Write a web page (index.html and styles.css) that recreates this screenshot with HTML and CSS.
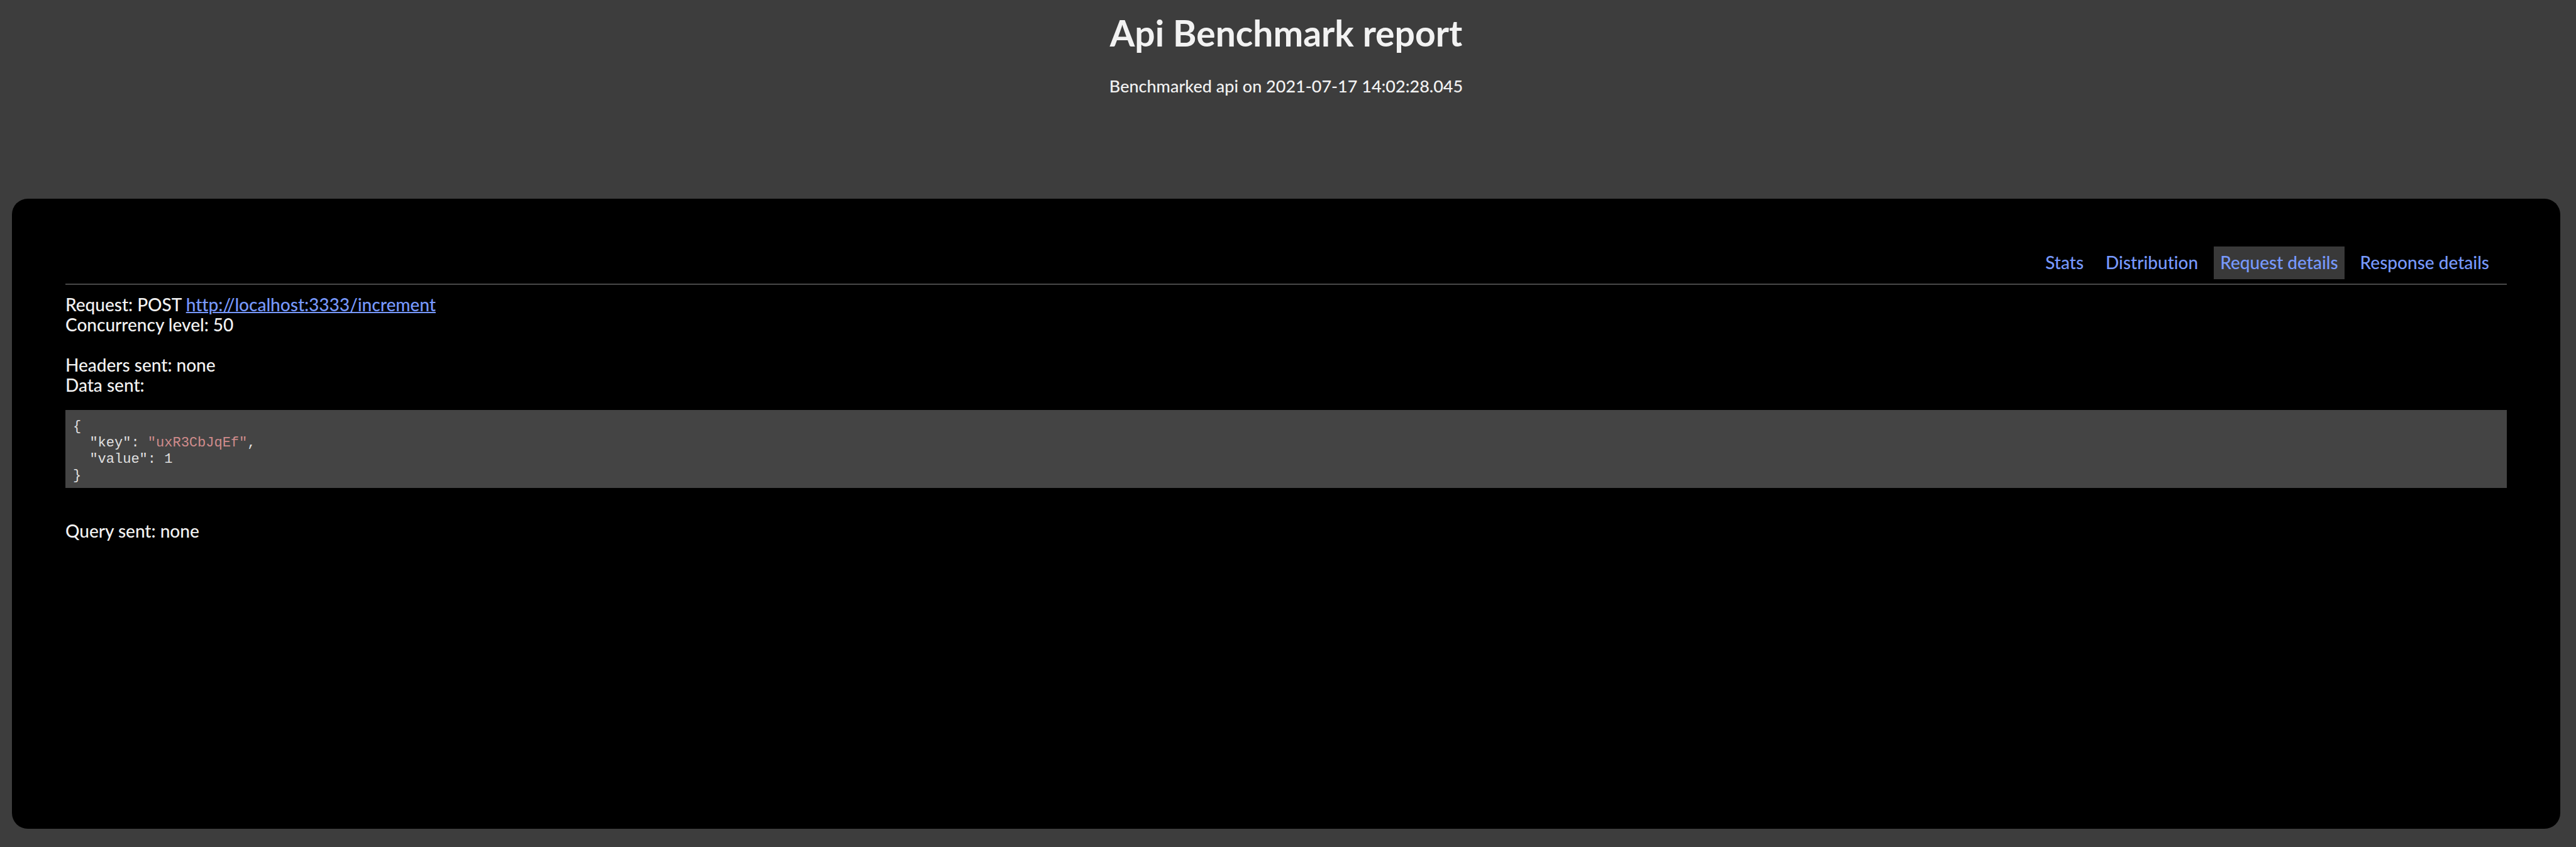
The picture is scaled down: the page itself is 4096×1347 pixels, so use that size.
FILE: index.html
```html
<!DOCTYPE html>
<html lang="en">
<head>
<meta charset="utf-8">
<title>Api Benchmark report</title>
<link rel="stylesheet" href="styles.css">
</head>
<body>
<header class="header">
<h1 class="title">Api Benchmark report</h1>
<p class="subtitle">Benchmarked api on 2021-07-17 14:02:28.045</p>
</header>
<main class="panel">
<nav class="tabs">
<a class="tab" href="#stats">Stats</a>
<a class="tab" href="#distribution">Distribution</a>
<a class="tab tab-active" href="#request">Request details</a>
<a class="tab" href="#response">Response details</a>
</nav>
<section class="details" id="request">
<p class="group">Request: POST <a class="link" href="http://localhost:3333/increment">http://localhost:3333/increment</a><br>Concurrency level: 50</p>
<p class="group">Headers sent: none<br>Data sent:</p>
<pre class="code"><code class="line">{</code><code class="line">  "key": <span class="string">"uxR3CbJqEf"</span>,</code><code class="line">  "value": 1</code><code class="line">}</code></pre>
<p class="group">Query sent: none</p>
</section>
</main>
</body>
</html>
```
FILE: styles.css
```css
* {
  box-sizing: border-box;
}

body {
  display: flex;
  flex-direction: column;
  min-height: 100vh;
  margin: 0;
  padding: 0 25px 29px 19px;
  background: #3d3d3d;
  color: #f2f2f2;
  font-family: "Trebuchet MS", Lato, sans-serif;
  font-size: 28px;
  font-weight: 500;
  line-height: 32px;
  font-variant-ligatures: none;
}

.header {
  padding: 18px 0 163px;
  text-align: center;
}

.title {
  margin: 0 0 35px;
  font-size: 57px;
  font-weight: 700;
  line-height: 68px;
}

.subtitle {
  margin: 0;
  font-size: 27px;
}

.panel {
  flex: 1;
  padding: 76px 85px;
  border-radius: 25px;
  background: #000;
}

.tabs {
  display: flex;
  justify-content: flex-end;
  gap: 15px;
  padding: 0 18px 7px 0;
  border-bottom: 2px solid #484848;
}

.tab {
  padding: 9px 10px 11px;
  color: #7799ff;
  text-decoration: none;
}

.tab-active {
  background: #393939;
}

.details {
  display: flex;
  flex-direction: column;
  padding-top: 15px;
}

.group {
  margin: 0 0 32px;
}

.group:has(+ .code) {
  margin-bottom: 24px;
}

.link {
  color: #7799ff;
  text-decoration-thickness: 2px;
}

.code {
  margin: 0 0 52px;
  padding: 14px 12px 6px;
  background: #444;
  color: #e0e0e0;
  font-family: "Courier New", "Liberation Mono", monospace;
  font-size: 22px;
  font-weight: 400;
  line-height: 26px;
}

.line {
  display: block;
  font: inherit;
}

.string {
  color: #d08c8c;
}
```
